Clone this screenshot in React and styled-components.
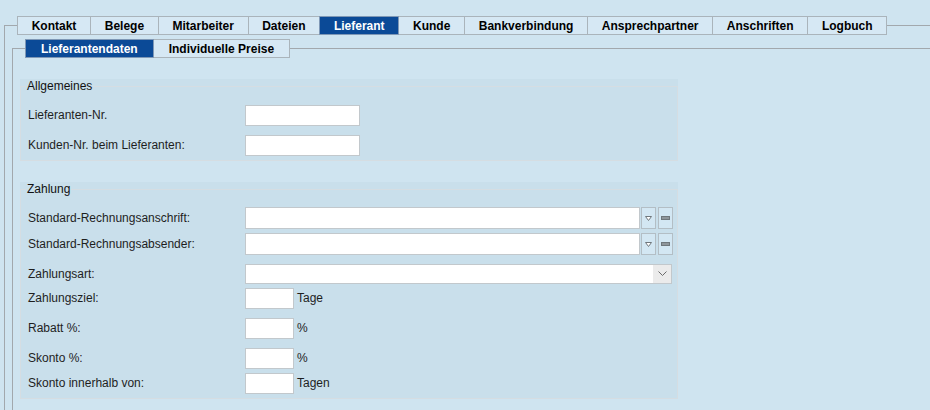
import React from "react";
import styled, { createGlobalStyle } from "styled-components";

const GlobalStyle = createGlobalStyle`
  html, body {
    margin: 0;
    padding: 0;
    background: #cfe4f0;
  }
  body {
    font-family: "Liberation Sans", Arial, sans-serif;
    font-size: 12px;
    color: #1a1a1a;
  }
`;

const mainTabs = [
  "Kontakt",
  "Belege",
  "Mitarbeiter",
  "Dateien",
  "Lieferant",
  "Kunde",
  "Bankverbindung",
  "Ansprechpartner",
  "Anschriften",
  "Logbuch",
];

const subTabs = ["Lieferantendaten", "Individuelle Preise"];

const Page = styled.div`
  height: 100vh;
  overflow: hidden;
  padding-top: 16px;
  box-sizing: border-box;
`;

// Outer and inner frames: fieldsets with the tab strip as legend
const Frame = styled.fieldset`
  margin: ${(p) => p.$top}px -60px 0 ${(p) => p.$left}px;
  padding: 0;
  min-width: 0;
  height: ${(p) => p.$height}px;
  border: 1px solid #a2a8ad;
`;

const TabLegend = styled.legend`
  margin-left: 12px;
  padding: 0;
`;

const TabStrip = styled.div`
  display: flex;
`;

const Tab = styled.div`
  height: 19px;
  box-sizing: border-box;
  padding: 0 ${(p) => p.$pad}px;
  margin-left: -1px;
  display: flex;
  align-items: center;
  font-weight: bold;
  font-size: 12px;
  border: 1px solid ${(p) => (p.$active ? "#7f98b6" : "#aab4bb")};
  background: ${(p) => (p.$active ? "#0b4a97" : "#d6e8f4")};
  color: ${(p) => (p.$active ? "#ffffff" : "#000000")};
  position: relative;
  z-index: ${(p) => (p.$active ? 1 : 0)};
  &:first-child {
    margin-left: 0;
  }
`;

const Panels = styled.div`
  margin: 21px 0 0 7px;
  width: 658px;
  display: flex;
  flex-direction: column;
  gap: 21px;
`;

const Section = styled.div`
  background: #c9dfeb;
`;

const Group = styled.fieldset`
  margin: 0;
  padding: 11px 7px 4px;
  min-width: 0;
  border: 1px solid #d5dde2;
`;

const GroupTitle = styled.legend`
  margin-left: -2px;
  padding: 0 1px;
  font-size: 12px;
  line-height: 14px;
  color: #111;
`;

const Row = styled.div`
  display: grid;
  grid-template-columns: 217px auto;
  align-items: center;
  height: 22px;
  margin-top: ${(p) => p.$gap || 0}px;
`;

const Label = styled.span`
  font-size: 12px;
  color: #1e1e1e;
  white-space: nowrap;
`;

const Controls = styled.div`
  display: flex;
  align-items: center;
`;

const TextInput = styled.input`
  box-sizing: border-box;
  width: ${(p) => p.$width}px;
  height: ${(p) => p.$height || 21}px;
  margin: 0;
  padding: 0 3px;
  border: 1px solid #c2c8cc;
  background: #ffffff;
  font: inherit;
  outline: none;
`;

const Unit = styled.span`
  font-size: 12px;
  margin-left: 3px;
  color: #1e1e1e;
`;

const SideButton = styled.button`
  box-sizing: border-box;
  width: 15px;
  height: 22px;
  margin: 0 0 0 ${(p) => p.$gap}px;
  padding: 0;
  border: 1px solid #b3bec5;
  background: #d3e7f3;
  display: flex;
  align-items: center;
  justify-content: center;
`;

const SelectBox = styled.div`
  box-sizing: border-box;
  width: 427px;
  height: 20px;
  border: 1px solid #c2c8cc;
  background: #ffffff;
  display: flex;
  justify-content: flex-end;
`;

const SelectArrow = styled.div`
  width: 18px;
  background: #ebebeb;
  display: flex;
  align-items: center;
  justify-content: center;
`;

const PickIcon = () => (
  <svg width="7" height="5" viewBox="0 0 7 5">
    <path d="M0.5 0.5 H6.5 L3.5 4.5 Z" fill="#ffffff" stroke="#6f777c" strokeWidth="1" />
  </svg>
);

const ClearIcon = () => (
  <svg width="9" height="4" viewBox="0 0 9 4">
    <rect x="0.5" y="0.5" width="8" height="3" fill="#8f969b" stroke="#6f777c" strokeWidth="1" />
  </svg>
);

const Chevron = () => (
  <svg width="9" height="6" viewBox="0 0 9 6">
    <path d="M0.5 0.5 L4.5 4.5 L8.5 0.5" fill="none" stroke="#6b6b6b" strokeWidth="1" />
  </svg>
);

const LookupField = ({ label, gap }) => (
  <Row $gap={gap}>
    <Label>{label}</Label>
    <Controls>
      <TextInput $width={395} $height={22} />
      <SideButton $gap={1} type="button">
        <PickIcon />
      </SideButton>
      <SideButton $gap={2} type="button">
        <ClearIcon />
      </SideButton>
    </Controls>
  </Row>
);

const ShortField = ({ label, unit, gap }) => (
  <Row $gap={gap}>
    <Label>{label}</Label>
    <Controls>
      <TextInput $width={49} />
      <Unit>{unit}</Unit>
    </Controls>
  </Row>
);

export default function App() {
  return (
    <Page>
      <GlobalStyle />
      <Frame $top={0} $left={4} $height={460}>
        <TabLegend>
          <TabStrip>
            {mainTabs.map((t) => (
              <Tab key={t} $pad={13.7} $active={t === "Lieferant"}>
                {t}
              </Tab>
            ))}
          </TabStrip>
        </TabLegend>
        <Frame $top={4} $left={7} $height={420}>
          <TabLegend>
            <TabStrip>
              {subTabs.map((t, i) => (
                <Tab key={t} $pad={15} $active={i === 0}>
                  {t}
                </Tab>
              ))}
            </TabStrip>
          </TabLegend>
          <Panels>
            <Section>
              <Group>
                <GroupTitle>Allgemeines</GroupTitle>
                <Row>
                  <Label>Lieferanten-Nr.</Label>
                  <Controls>
                    <TextInput $width={115} />
                  </Controls>
                </Row>
                <Row $gap={8}>
                  <Label>Kunden-Nr. beim Lieferanten:</Label>
                  <Controls>
                    <TextInput $width={115} />
                  </Controls>
                </Row>
              </Group>
            </Section>
            <Section>
              <Group>
                <GroupTitle>Zahlung</GroupTitle>
                <LookupField label="Standard-Rechnungsanschrift:" />
                <LookupField label="Standard-Rechnungsabsender:" gap={4} />
                <Row $gap={8}>
                  <Label>Zahlungsart:</Label>
                  <Controls>
                    <SelectBox>
                      <SelectArrow>
                        <Chevron />
                      </SelectArrow>
                    </SelectBox>
                  </Controls>
                </Row>
                <ShortField label="Zahlungsziel:" unit="Tage" gap={2} />
                <ShortField label="Rabatt %:" unit="%" gap={8} />
                <ShortField label="Skonto %:" unit="%" gap={8} />
                <ShortField label="Skonto innerhalb von:" unit="Tagen" gap={3} />
              </Group>
            </Section>
          </Panels>
        </Frame>
      </Frame>
    </Page>
  );
}
